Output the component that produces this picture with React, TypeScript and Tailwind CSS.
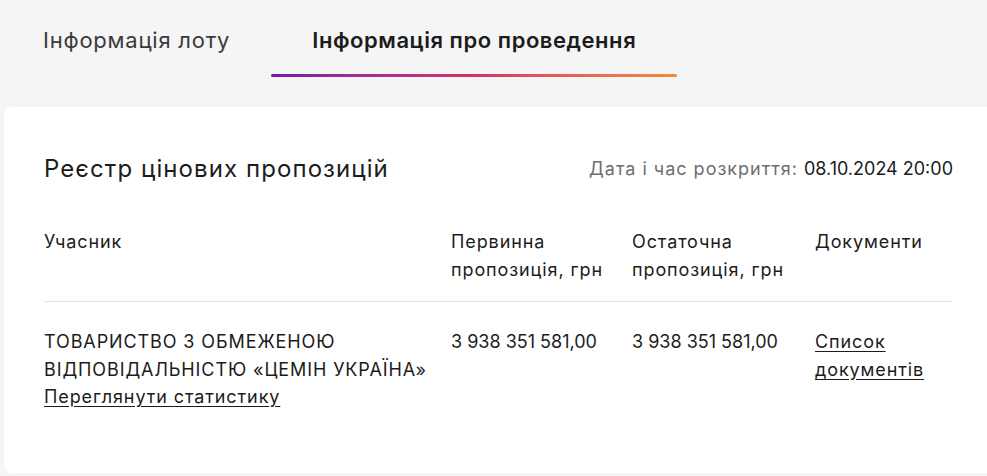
import React from "react";

export default function App() {
  const body = { fontFamily: "Inter, 'Noto Sans', sans-serif" };
  return (
    <div className="w-[987px] h-[476px] overflow-hidden bg-[#f5f5f6] text-[#1c1c1c]" style={body}>
      <div className="flex pl-[2px] h-[78px] items-stretch">
        <div className="px-[41px] flex items-center pt-[2px] text-[22px] tracking-[0.035em] text-[#3a3a3a]">
          Інформація лоту
        </div>
        <div className="relative px-[41px] flex items-center pt-[2px] text-[22px] tracking-[0.025em] font-semibold text-[#1c1c1c]">
          Інформація про проведення
          <div className="absolute left-0 right-0 bottom-[1px] h-[3px] rounded-full bg-gradient-to-r from-[#7a10b0] via-[#d6306a] to-[#f28b34]" />
        </div>
      </div>
      <div className="ml-[4px] mt-[29px] w-[1000px] h-[366px] bg-white rounded-[8px] pl-[40px]">
        <div className="w-[909px]">
          <div className="flex items-center justify-between pt-[46px]">
            <div className="text-[24px] leading-[32px] tracking-[0.045em] text-[#1c1c1c]">Реєстр цінових пропозицій</div>
            <div className="text-[18px] leading-[28px]">
              <span className="text-[#6e6e6e] tracking-[0.055em]">Дата і час розкриття: </span>
              <span className="text-[#1c1c1c]">08.10.2024 20:00</span>
            </div>
          </div>
          <div className="mt-[43px] grid grid-cols-[407px_181px_183px_1fr] text-[18px] leading-[28px] tracking-[0.05em] pb-[17px] border-b border-[#e3e3e3]">
            <div>Учасник</div>
            <div>Первинна пропозиція, грн</div>
            <div>Остаточна пропозиція, грн</div>
            <div>Документи</div>
          </div>
          <div className="grid grid-cols-[407px_181px_183px_1fr] text-[18px] leading-[27.5px] pt-[26px]">
            <div className="tracking-[0.05em]">
              <div>ТОВАРИСТВО З ОБМЕЖЕНОЮ ВІДПОВІДАЛЬНІСТЮ «ЦЕМІН УКРАЇНА»</div>
              <a className="underline underline-offset-[3px]">Переглянути статистику</a>
            </div>
            <div>3 938 351 581,00</div>
            <div>3 938 351 581,00</div>
            <div className="tracking-[0.05em]">
              <a className="underline underline-offset-[3px]">Список документів</a>
            </div>
          </div>
        </div>
      </div>
    </div>
  );
}
